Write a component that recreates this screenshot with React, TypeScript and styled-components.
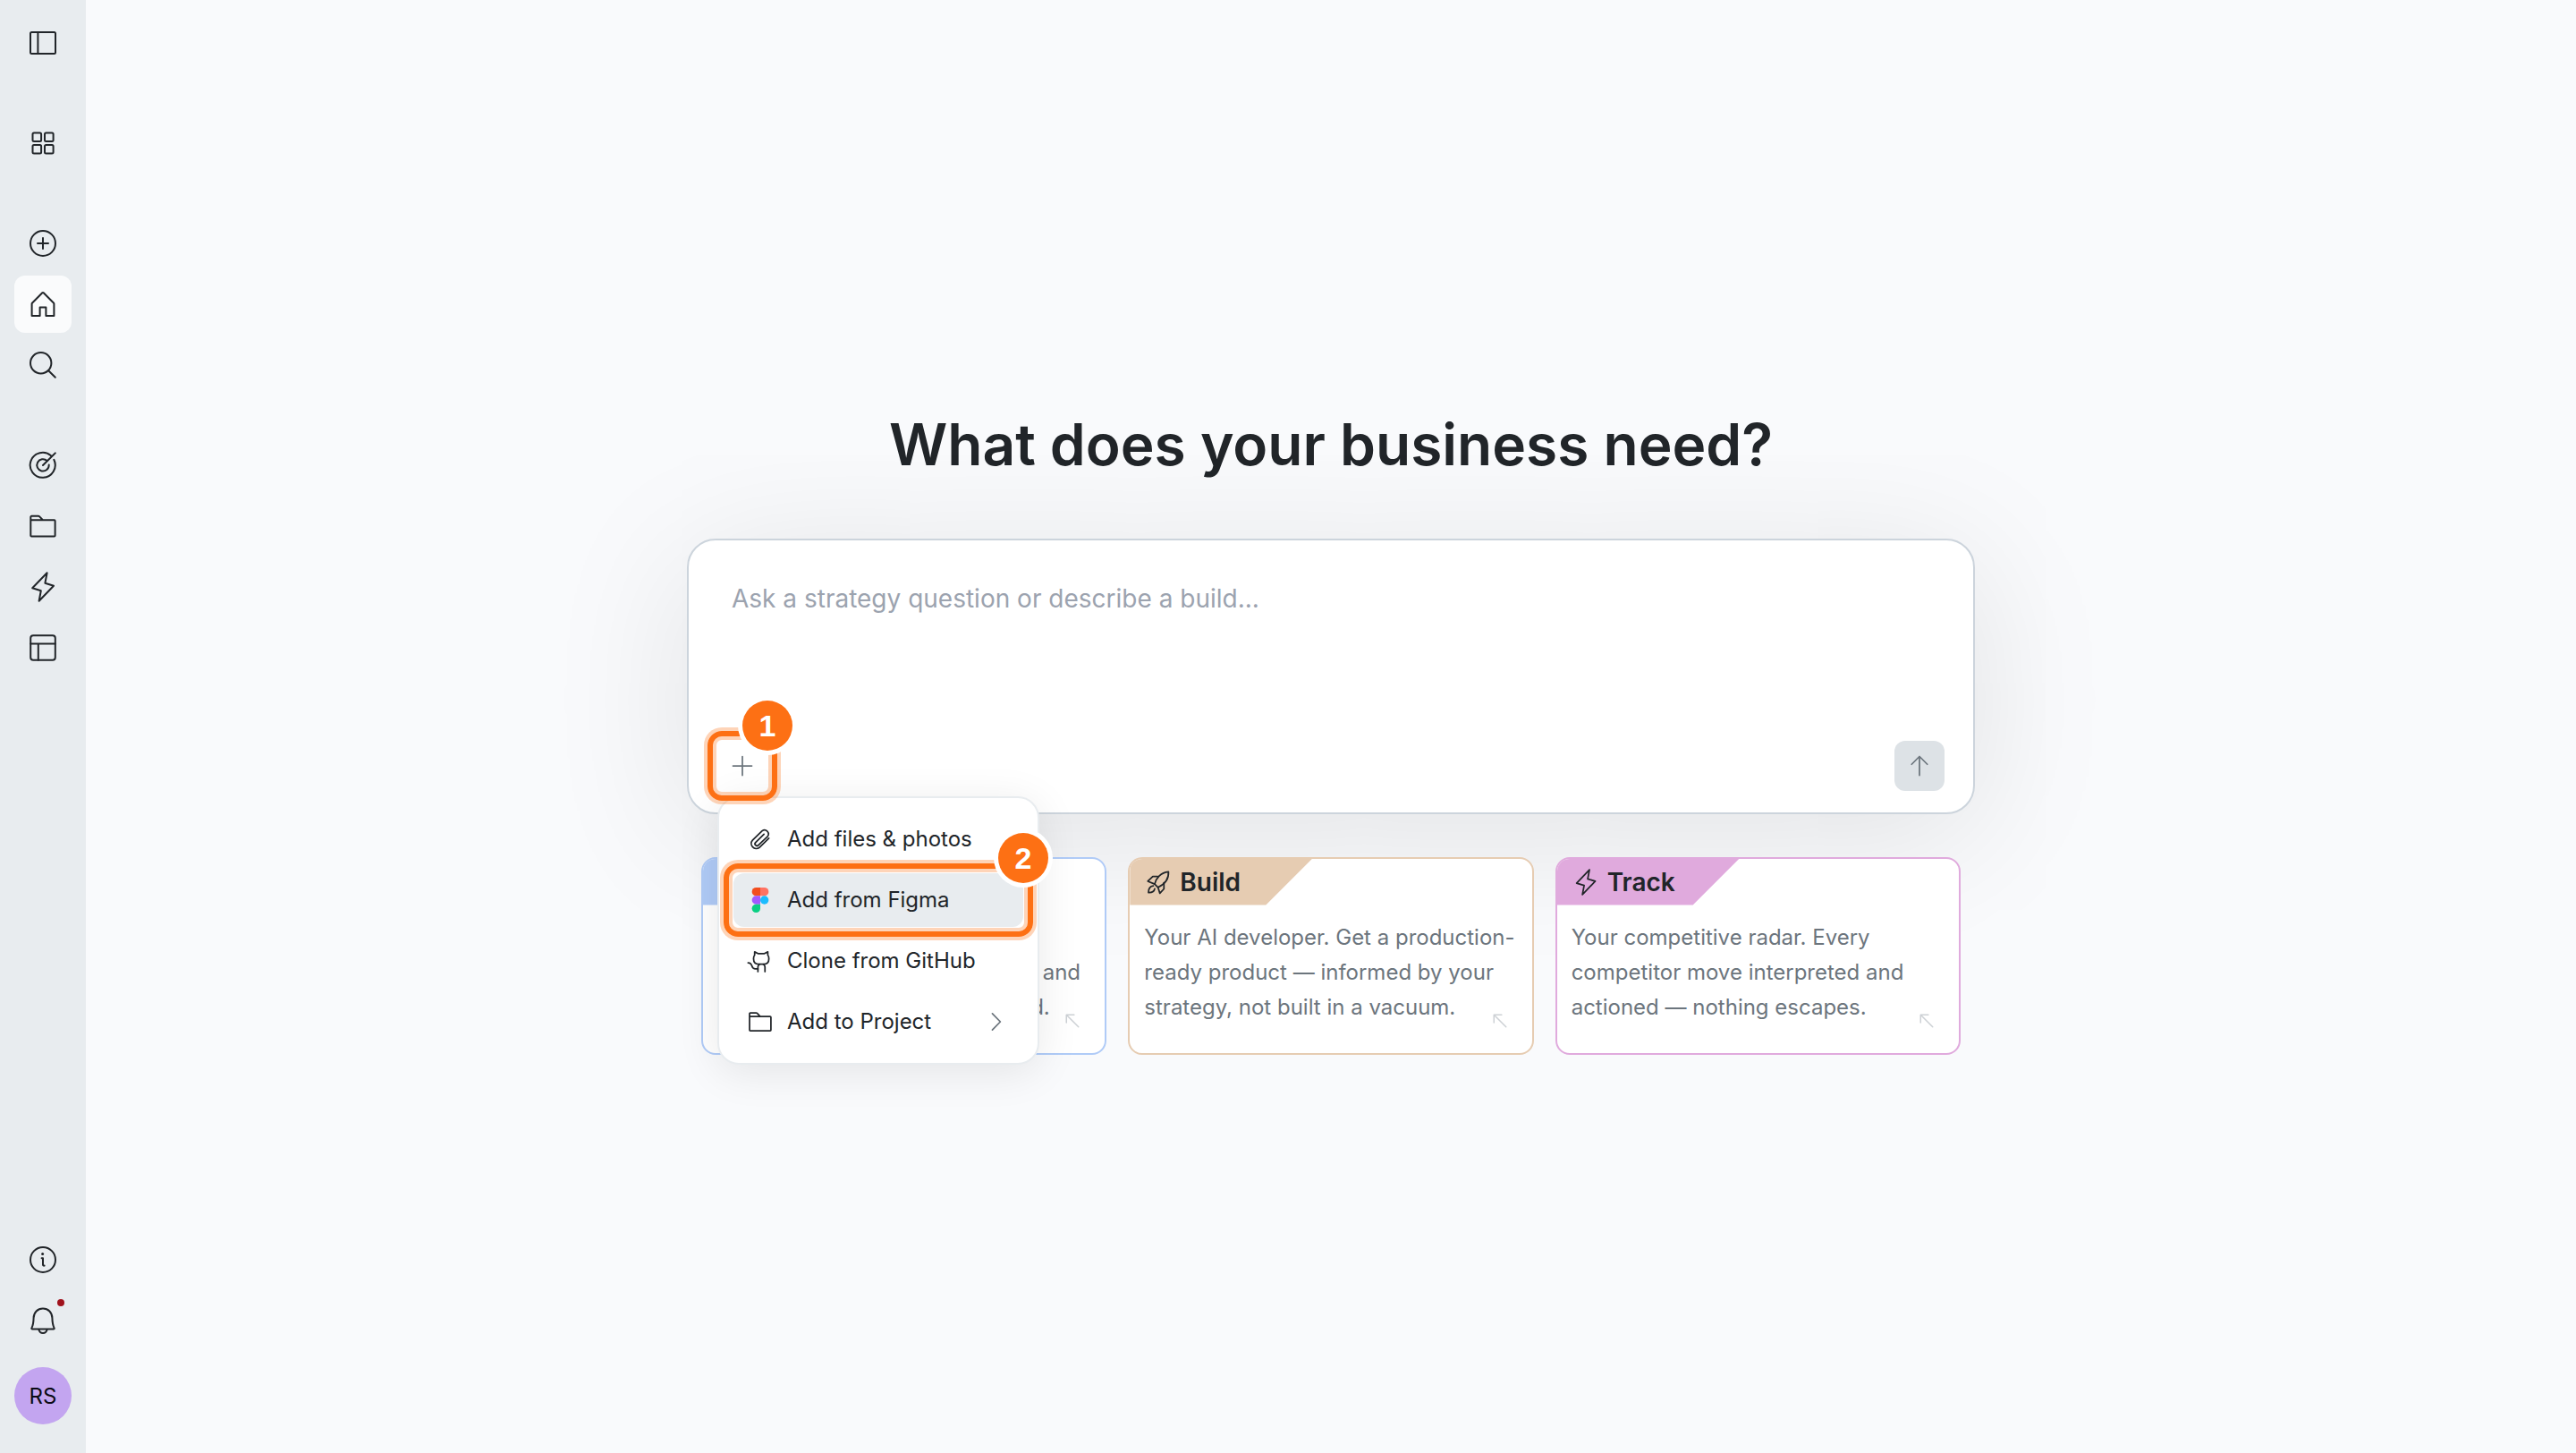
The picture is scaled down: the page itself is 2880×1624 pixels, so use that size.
import React from 'react';
import styled, { createGlobalStyle } from 'styled-components';

const ink = '#212529';
const muted = '#6c757d';
const accent = '#fd7014';

const GlobalStyle = createGlobalStyle`
  *, *::before, *::after { box-sizing: border-box; }
  body {
    margin: 0;
    background: #f9fafc;
    color: ${ink};
    font-family: Inter, "Liberation Sans", sans-serif;
    font-size: 24px;
  }
  button, textarea { font: inherit; color: inherit; }
`;

const Shell = styled.div`
  display: flex;
  min-height: 100vh;
`;

const Sidebar = styled.nav`
  display: flex;
  flex-direction: column;
  gap: 48px;
  flex: none;
  width: 96px;
  padding: 16px 16px 32px;
  background: #e8ecef;
`;

const NavGroup = styled.div<{ $end?: boolean }>`
  display: flex;
  flex-direction: column;
  gap: 4px;
  margin-top: ${(p) => (p.$end ? 'auto' : '0')};
`;

const NavButton = styled.button<{ $active?: boolean }>`
  position: relative;
  display: grid;
  place-items: center;
  width: 64px;
  height: 64px;
  padding: 0;
  border: 0;
  border-radius: 12px;
  background: ${(p) => (p.$active ? '#fafbfc' : 'transparent')};
`;

const UnreadDot = styled.span`
  position: absolute;
  top: 8px;
  right: 8px;
  width: 8px;
  height: 8px;
  border-radius: 50%;
  background: #a0121c;
`;

const Avatar = styled.button`
  width: 64px;
  height: 64px;
  margin-top: 16px;
  padding: 0;
  border: 0;
  border-radius: 50%;
  background: #c3a5f0;
  color: #0b0b14;
  font-size: 24px;
`;

const Main = styled.main`
  display: flex;
  flex: 1;
  flex-direction: column;
  align-items: center;
  justify-content: center;
  padding: 12px 48px 0;
`;

const Heading = styled.h1`
  margin: 0 0 66px;
  font-size: 64px;
  font-weight: 600;
  line-height: 78px;
  text-align: center;
`;

const Composer = styled.form`
  display: flex;
  flex-direction: column;
  width: 100%;
  max-width: 1440px;
  padding: 40px 32px 24px;
  border: 2px solid #ccd4dc;
  border-radius: 32px;
  background: #fff;
  box-shadow: 0 24px 160px rgba(0, 0, 0, 0.1);
`;

const Prompt = styled.textarea`
  display: block;
  width: 100%;
  height: 160px;
  padding: 4px 16px;
  border: 0;
  outline: 0;
  resize: none;
  background: transparent;
  font-size: 28px;
  line-height: 42px;
  &::placeholder { color: #9ca3af; opacity: 1; }
`;

const ComposerBar = styled.div`
  display: flex;
  justify-content: space-between;
  margin-top: 24px;
`;

const Anchor = styled.div`
  position: relative;
`;

const SquareButton = styled.button<{ $filled?: boolean }>`
  display: grid;
  place-items: center;
  width: 56px;
  height: 56px;
  padding: 0;
  border: 0;
  border-radius: 12px;
  background: ${(p) => (p.$filled ? '#dde2e6' : 'transparent')};
  color: ${muted};
`;

const Spotlight = styled.span`
  position: absolute;
  z-index: 2;
  inset: -11px;
  border: 6px solid ${accent};
  border-radius: 16px;
  box-shadow: 0 0 0 4px rgba(253, 112, 20, 0.3), inset 0 0 0 4px rgba(253, 112, 20, 0.3);
  pointer-events: none;
`;

const StepBadge = styled.span`
  position: absolute;
  z-index: 3;
  top: -45px;
  right: -28px;
  display: grid;
  place-items: center;
  width: 56px;
  height: 56px;
  border-radius: 50%;
  background: ${accent};
  box-shadow: 0 0 0 5px #fff;
  color: #fff;
  font-family: "Liberation Sans", Arial, sans-serif;
  font-size: 34px;
  font-weight: 700;
  line-height: 40px;
  pointer-events: none;
`;

const Menu = styled.div`
  position: absolute;
  z-index: 1;
  top: 62px;
  left: 0;
  display: flex;
  flex-direction: column;
  gap: 8px;
  width: 360px;
  padding: 16px;
  border: 2px solid #e8ecef;
  border-radius: 24px;
  background: #fff;
  box-shadow: 0 8px 48px rgba(0, 0, 0, 0.09);
`;

const MenuItem = styled.button<{ $active?: boolean }>`
  display: flex;
  align-items: center;
  gap: 16px;
  width: 100%;
  height: 60px;
  padding: 0 16px;
  border: 0;
  border-radius: 12px;
  background: ${(p) => (p.$active ? '#e8ecef' : 'transparent')};
  text-align: left;
  white-space: nowrap;
`;

const MenuLabel = styled.span`
  flex: 1;
`;

const MenuHint = styled.span`
  display: flex;
  color: ${muted};
`;

const Cards = styled.section`
  display: grid;
  grid-template-columns: repeat(3, 1fr);
  gap: 24px;
  width: 100%;
  max-width: 1408px;
  margin-top: 48px;
`;

const Card = styled.article<{ $tone: string }>`
  position: relative;
  overflow: hidden;
  border: 2px solid ${(p) => p.$tone};
  border-radius: 16px;
  background: #fff;
`;

const CardTab = styled.h2<{ $tone: string }>`
  display: flex;
  align-items: center;
  gap: 10px;
  width: 204px;
  height: 52px;
  margin: 0;
  padding: 0 18px;
  background: ${(p) => p.$tone};
  clip-path: polygon(0 0, 100% 0, calc(100% - 52px) 100%, 0 100%);
  font-size: 28px;
  font-weight: 600;
  line-height: 40px;
`;

const CardText = styled.p`
  margin: 0;
  padding: 16px 16px 32px;
  color: ${muted};
  font-size: 24px;
  line-height: 39px;
`;

const CardArrow = styled.span`
  position: absolute;
  right: 24px;
  bottom: 24px;
  display: flex;
  color: #cdd1d5;
`;

const Glyph = styled.svg`
  display: block;
  flex: none;
  overflow: visible;
`;

type IconProps = { size?: number; weight?: number; children: React.ReactNode };

function Icon({ size = 32, weight = 2, children }: IconProps) {
  return (
    <Glyph
      width={size}
      height={size}
      viewBox="0 0 32 32"
      fill="none"
      stroke="currentColor"
      strokeWidth={weight}
      strokeLinecap="round"
      strokeLinejoin="round"
      aria-hidden="true"
    >
      {children}
    </Glyph>
  );
}

const bolt = <path d="M20.6 0.2 4.2 17.2 13.8 20.2 11.6 31.8 28 14.8 18.4 11.8Z" />;
const folder = (
  <path d="M2.3 9.3H28.6a1 1 0 0 1 1 1V26.6a1 1 0 0 1-1 1H3.3a1 1 0 0 1-1-1V5.8a1 1 0 0 1 1-1H10.8a2 2 0 0 1 1.4.6L15.6 9" />
);

const icons = {
  panel: (
    <>
      <rect x="2" y="4" width="28" height="24" rx="1.5" />
      <path d="M10.4 4v24" />
    </>
  ),
  grid: (
    <>
      <rect x="4.5" y="4.5" width="9.6" height="9.6" rx="1.5" />
      <rect x="18" y="4.5" width="9.6" height="9.6" rx="1.5" />
      <rect x="4.5" y="18" width="9.6" height="9.6" rx="1.5" />
      <rect x="18" y="18" width="9.6" height="9.6" rx="1.5" />
    </>
  ),
  add: (
    <>
      <circle cx="16" cy="16" r="14" />
      <path d="M16 10v12M10 16h12" />
    </>
  ),
  home: (
    <path d="M3.6 29V15.4a1 1 0 0 1 .3-.7L15.3 3.3a1 1 0 0 1 1.4 0L28.1 14.7a1 1 0 0 1 .3.7V29H19.4V19.6H12.6V29Z" />
  ),
  search: (
    <>
      <circle cx="13.7" cy="13.7" r="11.7" />
      <path d="m22.2 22.2 7.6 7.6" />
    </>
  ),
  target: (
    <>
      <path d="M16 16 29.8 2.4" />
      <path d="M25.2 5.6A14 14 0 1 0 28.3 9.8" />
      <path d="M20.6 11A6.7 6.7 0 1 0 22.7 15.6" />
    </>
  ),
  layout: (
    <>
      <rect x="2.2" y="2.2" width="27.6" height="27.6" rx="3" />
      <path d="M2.2 11.4H29.8M10.8 11.4V29.8" />
    </>
  ),
  info: (
    <>
      <circle cx="16" cy="16" r="14" />
      <path d="M14.6 14.2h1.4v7.4q0 1.2 1.6 1" />
      <circle cx="15.6" cy="9.6" r="1.5" fill="currentColor" stroke="none" />
    </>
  ),
  bell: (
    <>
      <path d="M16 2.6c6 0 10.2 4.4 10.4 10.4.1 4.2.4 7.8 2.2 11.4.3.8 0 1.2-.8 1.2H4.2c-.8 0-1.1-.4-.8-1.2 1.8-3.6 2.1-7.2 2.2-11.4C5.8 7 10 2.6 16 2.6Z" />
      <path d="M11.4 26c.6 2.6 2.4 4 4.6 4s4-1.4 4.6-4" />
    </>
  ),
  plus: <path d="M16 4v24M4 16h24" />,
  up: <path d="M16 28V4M6 14 16 4 26 14" />,
  clip: (
    <path d="M27 14.8 14.8 26.6a6.4 6.4 0 0 1-8.7-9.3L18.4 5.3a5 5 0 0 1 7 7L13.6 23.7a2.5 2.5 0 0 1-3.6-3.6L20.7 9.5" />
  ),
  octocat: (
    <>
      <path d="M8.8 4.4v4.2C7.7 9.8 7.4 11.2 7.4 13c0 4.2 2.4 7 6.6 7.2h6.4c4.2-.2 6.6-3 6.6-7.2 0-1.8-.3-3.2-1.4-4.4V4.4L20.8 6.8h-7.2Z" />
      <path d="M15.2 20.2c-1.5.8-2.2 1.8-2.2 3.4v6M19.8 20.2c1.5.8 2.2 1.8 2.2 3.4v6" />
      <path d="M13 26.2H9.8c-3 0-3.7-1.3-4.4-3.6S3.6 18.4.4 18.4" />
    </>
  ),
  chevron: <path d="M10.8 5.5 21 16 10.8 26.5" />,
  corner: <path d="M7 18.5V7H18.5M7 7 25 25" />,
  rocket: (
    <>
      <path d="M11.4 18.4C13 11 19 3.6 29 2.6c.6 9.4-4.8 16-13.4 20Z" />
      <path d="M15.2 8.8 9 8.6 2.6 14.8 11.4 18.4M15.6 22.6 18 30.2 23.2 24.6V16.6" />
      <path d="M9.6 20.6c-4.2.4-6.2 3.6-6.2 8.6 4.6.2 7.4-1.2 8-4.8" />
    </>
  ),
};

function FigmaLogo() {
  return (
    <Glyph width="28" height="28" viewBox="0 0 28 28" aria-hidden="true">
      <path d="M14 0H9.33a4.67 4.67 0 0 0 0 9.34H14Z" fill="#f24e1e" />
      <path d="M14 0h4.67a4.67 4.67 0 0 1 0 9.34H14Z" fill="#ff7262" />
      <path d="M14 9.33H9.33a4.67 4.67 0 0 0 0 9.34H14Z" fill="#a259ff" />
      <circle cx="18.67" cy="14" r="4.67" fill="#1abcfe" />
      <path d="M9.33 18.66H14v4.67a4.67 4.67 0 1 1-4.67-4.67Z" fill="#0acf83" />
    </Glyph>
  );
}

const cards = [
  {
    title: 'Plan',
    tone: '#b0cbf7',
    icon: icons.target,
    text: 'Your AI strategist. Spot gaps, validate demand, chart markets and plot every move you can defend.',
  },
  {
    title: 'Build',
    tone: '#e6ccb2',
    icon: icons.rocket,
    text: 'Your AI developer. Get a production-ready product — informed by your strategy, not built in a vacuum.',
  },
  {
    title: 'Track',
    tone: '#e0aadd',
    icon: bolt,
    text: 'Your competitive radar. Every competitor move interpreted and actioned — nothing escapes.',
  },
];

export default function App() {
  return (
    <>
      <GlobalStyle />
      <Shell>
        <Sidebar aria-label="Main">
          <NavGroup>
            <NavButton aria-label="Toggle sidebar"><Icon>{icons.panel}</Icon></NavButton>
          </NavGroup>
          <NavGroup>
            <NavButton aria-label="Apps"><Icon>{icons.grid}</Icon></NavButton>
          </NavGroup>
          <NavGroup>
            <NavButton aria-label="New"><Icon>{icons.add}</Icon></NavButton>
            <NavButton aria-label="Home" $active><Icon>{icons.home}</Icon></NavButton>
            <NavButton aria-label="Search"><Icon>{icons.search}</Icon></NavButton>
          </NavGroup>
          <NavGroup>
            <NavButton aria-label="Goals"><Icon>{icons.target}</Icon></NavButton>
            <NavButton aria-label="Projects"><Icon>{folder}</Icon></NavButton>
            <NavButton aria-label="Activity"><Icon>{bolt}</Icon></NavButton>
            <NavButton aria-label="Templates"><Icon>{icons.layout}</Icon></NavButton>
          </NavGroup>
          <NavGroup $end>
            <NavButton aria-label="Help"><Icon>{icons.info}</Icon></NavButton>
            <NavButton aria-label="Notifications">
              <Icon>{icons.bell}</Icon>
              <UnreadDot />
            </NavButton>
            <Avatar aria-label="Account">RS</Avatar>
          </NavGroup>
        </Sidebar>

        <Main>
          <Heading>What does your business need?</Heading>
          <Composer onSubmit={(e) => e.preventDefault()}>
            <Prompt aria-label="Prompt" placeholder="Ask a strategy question or describe a build..." />
            <ComposerBar>
              <Anchor>
                <SquareButton type="button" aria-label="Add"><Icon size={28}>{icons.plus}</Icon></SquareButton>
                <Spotlight />
                <StepBadge>1</StepBadge>
                <Menu>
                  <MenuItem type="button">
                    <Icon size={28}>{icons.clip}</Icon>
                    <MenuLabel>Add files &amp; photos</MenuLabel>
                  </MenuItem>
                  <Anchor>
                    <MenuItem type="button" $active>
                      <FigmaLogo />
                      <MenuLabel>Add from Figma</MenuLabel>
                    </MenuItem>
                    <Spotlight />
                    <StepBadge>2</StepBadge>
                  </Anchor>
                  <MenuItem type="button">
                    <Icon size={28}>{icons.octocat}</Icon>
                    <MenuLabel>Clone from GitHub</MenuLabel>
                  </MenuItem>
                  <MenuItem type="button">
                    <Icon size={28}>{folder}</Icon>
                    <MenuLabel>Add to Project</MenuLabel>
                    <MenuHint><Icon size={28}>{icons.chevron}</Icon></MenuHint>
                  </MenuItem>
                </Menu>
              </Anchor>
              <SquareButton type="submit" aria-label="Send" $filled><Icon size={28}>{icons.up}</Icon></SquareButton>
            </ComposerBar>
          </Composer>
          <Cards>
            {cards.map((card) => (
              <Card key={card.title} $tone={card.tone}>
                <CardTab $tone={card.tone}>
                  <Icon size={28}>{card.icon}</Icon>
                  {card.title}
                </CardTab>
                <CardText>{card.text}</CardText>
                <CardArrow><Icon size={24}>{icons.corner}</Icon></CardArrow>
              </Card>
            ))}
          </Cards>
        </Main>
      </Shell>
    </>
  );
}
